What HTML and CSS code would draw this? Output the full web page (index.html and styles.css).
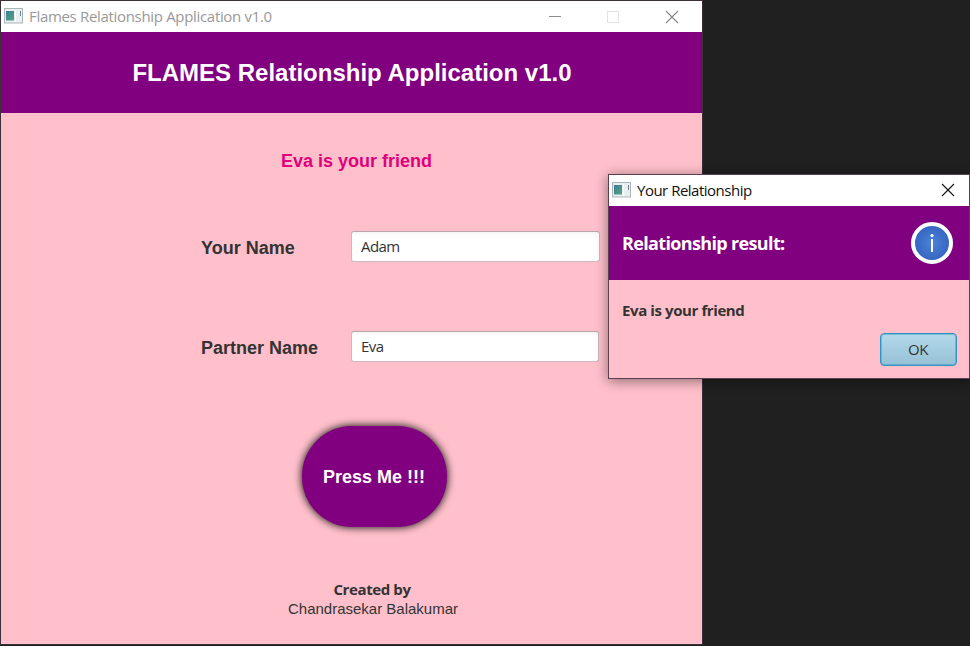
FILE: index.html
```html
<!DOCTYPE html>
<html lang="en">
<head>
<meta charset="utf-8">
<title>Flames Relationship Application v1.0</title>
<link rel="stylesheet" href="styles.css">
</head>
<body>
<svg width="0" height="0" class="defs" aria-hidden="true">
  <defs>
    <linearGradient id="pane" x1="0" y1="0" x2="1" y2="1"><stop offset="0" stop-color="#3c7c9c"/><stop offset="1" stop-color="#56a67c"/></linearGradient>
    <radialGradient id="info"><stop offset="0" stop-color="#4b83d6"/><stop offset="1" stop-color="#3463c0"/></radialGradient>
    <symbol id="app" viewBox="0 0 19 16">
      <rect x=".5" y=".5" width="18" height="14.5" fill="#e9eff0" stroke="#a9b5ba"/>
      <rect x="2" y="3" width="8" height="9.500" fill="url(#pane)"/>
      <path d="M11.5 2v12" stroke="#fff"/>
      <path d="M16.5 3v5" stroke="#72858a"/>
    </symbol>
  </defs>
</svg>
<main class="window main">
  <header class="titlebar">
    <svg class="app-icon" width="19" height="16"><use href="#app"/></svg>
    <span class="caption"><span class="t-app">Flames Relationship Application v1.0</span></span>
    <svg class="controls" width="132" height="14" fill="none">
      <path d="M1 6.5h12" stroke="#8b8b8b"/>
      <rect x="59.5" y="1.5" width="11" height="11" stroke="#e2e2e2"/>
      <path d="M118 1l12 12m0-12l-12 12" stroke="#888" stroke-width="1.100"/>
    </svg>
  </header>
  <h1 class="banner">FLAMES Relationship Application v1.0</h1>
  <section class="content">
    <p class="result">Eva is your friend</p>
    <div class="row"><label for="you">Your Name</label><input id="you" value="Adam"></div>
    <div class="row partner"><label for="partner">Partner Name</label><input id="partner" value="Eva"></div>
    <button class="press">Press Me !!!</button>
    <footer class="credit"><strong>Created by</strong><span>Chandrasekar Balakumar</span></footer>
  </section>
</main>
<div class="window dialog" role="dialog">
  <header class="titlebar">
    <svg class="app-icon" width="19" height="16"><use href="#app"/></svg>
    <span class="caption"><span class="t-dialog">Your Relationship</span></span>
    <svg class="close" width="14" height="14" fill="none"><path d="M1 1l12 12m0-12l-12 12" stroke="#111" stroke-width="1.100"/></svg>
  </header>
  <div class="dialog-head">
    <h2>Relationship result:</h2>
    <svg width="42" height="42" fill="none">
      <circle cx="21" cy="21" r="19" fill="url(#info)" stroke="#fff" stroke-width="4"/>
      <circle cx="21" cy="13.500" r="1.600" fill="#fff"/>
      <path d="M21 17v13" stroke="#fff" stroke-width="2"/>
    </svg>
  </div>
  <div class="dialog-body">
    <p>Eva is your friend</p>
    <button class="ok">OK</button>
  </div>
</div>
</body>
</html>
```
FILE: styles.css
```css
* { box-sizing: border-box; }
body {
  margin: 0;
  width: 970px;
  height: 646px;
  overflow: hidden;
  position: relative;
  background: #202020;
  color: #333;
  font-family: "Liberation Sans", sans-serif;
}
h1, h2, p { margin: 0; }
.defs { position: absolute; }
.window { position: absolute; background: #ffc0cb; }
.main { left: 0; top: 0; width: 703px; height: 645px; border: 1px solid #3a3038; }
.titlebar { display: flex; align-items: center; background: #fff; height: 31px; padding-left: 3px; }
.app-icon { flex: none; margin-bottom: 1px; }
.caption { flex: 1; margin: 0 0 2px 6px; font: 15px/20px "Open Sans", sans-serif; white-space: nowrap; }
.main .caption { color: #999; }
.main .controls { margin-right: 22px; }
.t-app { letter-spacing: -0.32px; }
.t-dialog { letter-spacing: -0.5px; color: #111; }
.banner {
  height: 81px;
  padding: 1px 0 0 1px;
  background: #800080;
  color: #fff;
  font-size: 24px;
  line-height: 80px;
  text-align: center;
}
.content { display: flex; flex-direction: column; }
.result { margin: 37px 0 0 280px; color: #e0007a; font-size: 18px; font-weight: bold; line-height: 22px; }
.row { display: flex; align-items: center; height: 31px; margin: 59px 0 0 200px; }
.row.partner { margin-top: 69px; }
.row label { width: 150px; font-size: 18px; font-weight: bold; padding-top: 3px; }
.row input {
  width: 249px;
  height: 31px;
  padding: 0 9px 2px;
  border: 1px solid #cbb9bd;
  border-top-color: #b9a5aa;
  border-radius: 3px;
  background: linear-gradient(#f5f5f5, #fff 4px);
  color: #333;
  font: 15px "Open Sans", sans-serif;
  letter-spacing: -0.6px;
}
.partner input { width: 248px; }
.press {
  width: 145px;
  height: 101px;
  margin: 64px 0 0 301px;
  padding: 2px 1px 0 0;
  border: 0;
  border-radius: 50px;
  background: #800080;
  box-shadow: 0 0 8px rgba(0, 0, 0, 1);
  color: #fff;
  font: bold 18px "Liberation Sans", sans-serif;
}
.credit { display: flex; flex-direction: column; align-items: center; width: 200px; margin: 53px 0 0 272px; font-size: 15px; line-height: 19px; }
.credit strong { font: bold 15px/19px "Open Sans", sans-serif; letter-spacing: -0.4px; padding-right: 2px; }
.dialog {
  left: 608px;
  top: 174px;
  width: 362px;
  height: 205px;
  border: 1px solid #5a4050;
  box-shadow: 0 2px 12px rgba(0, 0, 0, .45);
}
.dialog .close { margin: 0 14px 1px 0; }
.dialog-head { display: flex; align-items: center; justify-content: space-between; height: 74px; padding: 0 16px 0 13px; background: #800080; }
h2 { color: #fff; font: bold 18px "Open Sans", sans-serif; letter-spacing: -0.65px; }
.dialog-body { display: flex; flex-direction: column; padding: 19px 12px 0 13px; }
.dialog-body p { font: bold 15px/22px "Open Sans", sans-serif; letter-spacing: -0.4px; }
.ok {
  align-self: flex-end;
  width: 77px;
  height: 33px;
  margin-top: 12px;
  padding: 0 1px 2px 0;
  border: 1.5px solid #2f95c5;
  border-radius: 4px;
  background: linear-gradient(#b3d9ea, #97c1d6);
  box-shadow: inset 0 0 0 1px rgba(47, 149, 197, .45);
  color: #333;
  font: 15px "Open Sans", sans-serif;
  letter-spacing: -0.4px;
}
```
